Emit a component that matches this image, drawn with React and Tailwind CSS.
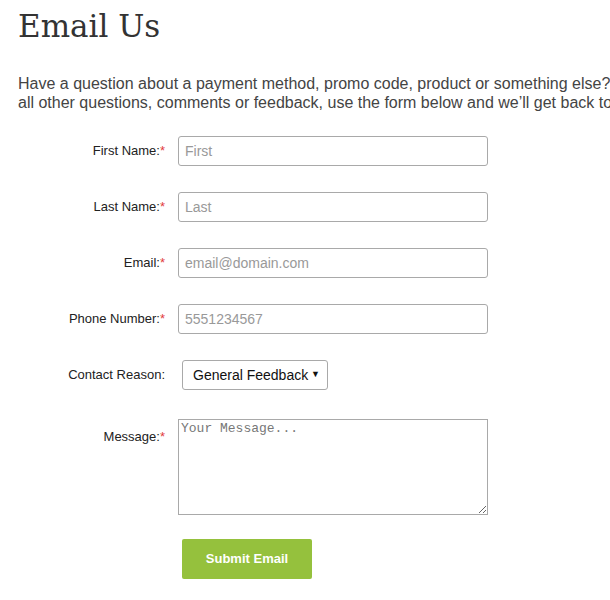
import { useState } from "react";

const fields = [
  { label: "First Name:", placeholder: "First" },
  { label: "Last Name:", placeholder: "Last" },
  { label: "Email:", placeholder: "email@domain.com" },
  { label: "Phone Number:", placeholder: "5551234567" },
];

function Label({ text, required }) {
  return (
    <label className="w-[165px] shrink-0 text-right text-[13px] text-[#222]">
      {text}
      {required && <span className="text-[#e23c3c]">*</span>}
    </label>
  );
}

export default function App() {
  const [reason, setReason] = useState("General Feedback");

  return (
    <div className="w-[610px] h-[600px] overflow-hidden bg-white font-['Liberation_Sans',Arial,sans-serif]">
      <div className="w-[680px] pl-[18px] pt-[6px]">
        <h1 className="font-['DejaVu_Serif',serif] text-[31px] leading-[40px] text-[#333]">Email Us</h1>
        <p className="mt-[28px] text-[16px] leading-[19px] text-[#444] whitespace-nowrap">
          Have a question about a payment method, promo code, product or something else? For
          <br />
          all other questions, comments or feedback, use the form below and we&rsquo;ll get back to you.
        </p>
      </div>

      <form className="mt-[24px] flex flex-col">
        {fields.map((f) => (
          <div key={f.label} className="flex items-center h-[30px] mb-[26px]">
            <Label text={f.label} required />
            <input
              placeholder={f.placeholder}
              className="ml-[13px] w-[310px] h-[30px] px-[6px] border border-[#a9a9a9] rounded-[3px] text-[14px] text-[#222] placeholder:text-[#999] outline-none"
            />
          </div>
        ))}

        <div className="flex items-center h-[30px] mb-[29px]">
          <Label text="Contact Reason:" />
          <div className="ml-[17px] relative">
            <select
              value={reason}
              onChange={(ev) => setReason(ev.target.value)}
              className="appearance-none w-[146px] h-[30px] pl-[10px] pr-[14px] border border-[#a9a9a9] rounded-[3px] text-[14px] text-[#111] bg-white"
            >
              <option>General Feedback</option>
              <option>Payment</option>
              <option>Promo Code</option>
              <option>Product</option>
            </select>
            <span className="absolute right-[8px] top-[8px] text-[9px] text-[#111] pointer-events-none">▼</span>
          </div>
        </div>

        <div className="flex items-start">
          <div className="pt-[8px] w-[165px] shrink-0 text-right text-[13px] text-[#222]">
            Message:<span className="text-[#e23c3c]">*</span>
          </div>
          <textarea
            placeholder="Your Message..."
            className="ml-[13px] w-[310px] h-[96px] px-[2px] py-[1px] border border-[#a9a9a9] text-[13px] leading-[15px] font-['Liberation_Mono',monospace] placeholder:text-[#777] outline-none"
          />
        </div>

        <div className="pl-[182px] mt-[24px]">
          <button type="button" className="w-[130px] h-[40px] bg-[#95c13d] rounded-[2px] text-white text-[13px] font-bold">
            Submit Email
          </button>
        </div>
      </form>
    </div>
  );
}
